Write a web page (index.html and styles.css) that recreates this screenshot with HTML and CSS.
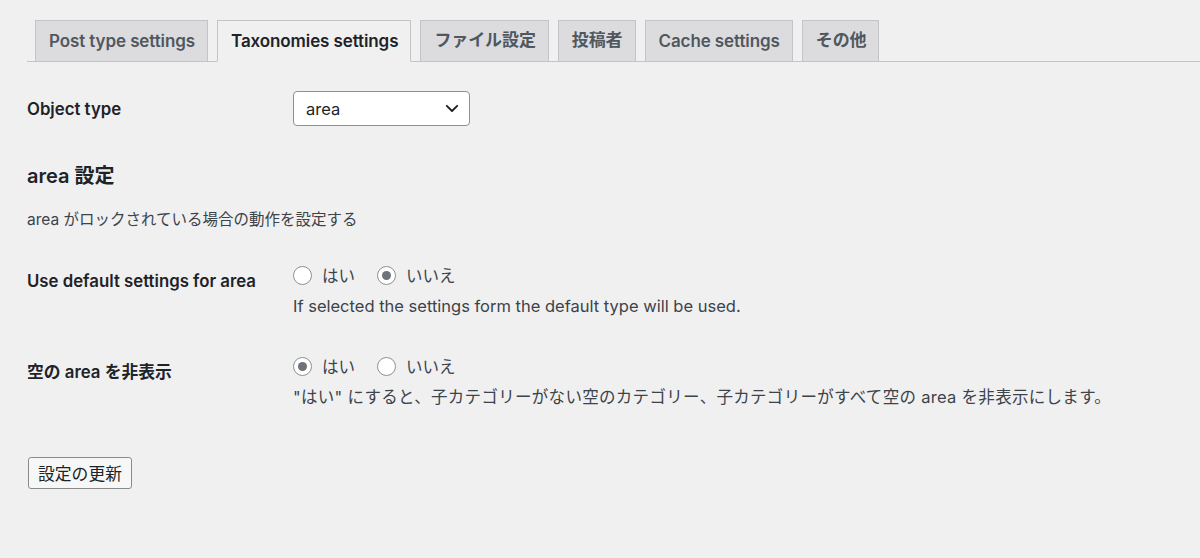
FILE: index.html
```html
<!DOCTYPE html>
<html lang="ja">
<head>
<meta charset="utf-8">
<title>Settings</title>
<link rel="stylesheet" href="styles.css">
</head>
<body>
<div class="wrap">
  <nav class="tabs">
    <a class="tab">Post type settings</a>
    <a class="tab active">Taxonomies settings</a>
    <a class="tab ja">ファイル設定</a>
    <a class="tab ja">投稿者</a>
    <a class="tab">Cache settings</a>
    <a class="tab ja">その他</a>
  </nav>

  <div class="row row-object">
    <div class="label">Object type</div>
    <div class="field">
      <div class="select">
        <span>area</span>
        <svg class="chev" width="14" height="9" viewBox="0 0 14 9"><path d="M1.8 1.8 L7 7 L12.2 1.8" fill="none" stroke="#1d2327" stroke-width="1.9" stroke-linecap="round" stroke-linejoin="round"/></svg>
      </div>
    </div>
  </div>

  <h2 class="heading">area 設定</h2>
  <p class="intro">area がロックされている場合の動作を設定する</p>

  <div class="row row-opt">
    <div class="label">Use default settings for area</div>
    <div class="field">
      <div class="radios">
        <label class="radio"><span class="dot"></span>はい</label>
        <label class="radio"><span class="dot on"></span>いいえ</label>
      </div>
      <p class="desc">If selected the settings form the default type will be used.</p>
    </div>
  </div>

  <div class="row row-opt second">
    <div class="label">空の area を非表示</div>
    <div class="field">
      <div class="radios">
        <label class="radio"><span class="dot on"></span>はい</label>
        <label class="radio"><span class="dot"></span>いいえ</label>
      </div>
      <p class="desc wide">"はい" にすると、子カテゴリーがない空のカテゴリー、子カテゴリーがすべて空の area を非表示にします。</p>
    </div>
  </div>

  <button class="submit">設定の更新</button>
</div>
</body>
</html>
```

FILE: styles.css
```css
html, body {
  margin: 0;
  padding: 0;
  background: #f0f0f1;
}
body {
  font-family: "Inter", "Noto Sans CJK JP", sans-serif;
  color: #1d2327;
  font-size: 16.5px;
}
.wrap {
  padding: 20px 0 0 27px;
}
.tabs {
  display: flex;
  border-bottom: 1px solid #c3c4c7;
  height: 41px;
  align-items: flex-end;
}
.tab {
  box-sizing: border-box;
  height: 42px;
  margin-bottom: -1px;
  margin-left: 9px;
  padding: 0 12px 0 13px;
  display: flex;
  align-items: center;
  background: #dcdcde;
  border: 1px solid #c3c4c7;
  color: #50575e;
  font-weight: 600;
  font-size: 17px;
  line-height: 24px;
  letter-spacing: -0.1px;
}
.tab.ja {
  font-family: "Noto Sans CJK JP", sans-serif;
  padding-bottom: 4px;
}
.tab:first-child { margin-left: 8px; }
.tab.active {
  background: #f0f0f1;
  border-bottom-color: #f0f0f1;
  color: #1d2327;
}
.row {
  display: flex;
}
.label {
  width: 266px;
  flex: none;
  font-weight: 600;
  font-size: 16.8px;
}
.row-object {
  margin-top: 29px;
  align-items: center;
}
.select {
  box-sizing: border-box;
  width: 177px;
  height: 35px;
  border: 1px solid #8c8f94;
  border-radius: 4px;
  background: #fff;
  display: flex;
  align-items: center;
  justify-content: space-between;
  padding: 0 10px 0 12px;
  font-size: 16.5px;
}
.heading {
  margin: 36px 0 0;
  font-size: 20px;
  font-weight: 600;
  line-height: 28px;
}
.intro {
  margin: 19px 0 0;
  font-size: 15.5px;
  line-height: 22px;
  color: #3c434a;
}
.row-opt {
  margin-top: 33px;
}
.row-opt.second {
  margin-top: 37px;
}
.row-opt .label {
  padding-top: 5px;
  line-height: 24px;
}
.radios {
  display: flex;
  gap: 22px;
  height: 22px;
  align-items: center;
}
.radio {
  display: flex;
  align-items: center;
  gap: 10px;
  font-size: 16.5px;
  color: #3c434a;
}
.dot {
  box-sizing: border-box;
  width: 19px;
  height: 19px;
  border: 1px solid #8c8f94;
  border-radius: 50%;
  background: #fff;
  position: relative;
}
.dot.on::after {
  content: "";
  position: absolute;
  left: 4px;
  top: 4px;
  width: 9px;
  height: 9px;
  border-radius: 50%;
  background: #6d7378;
}
.desc {
  margin: 8px 0 0;
  font-size: 16.5px;
  line-height: 24px;
  color: #3c434a;
}
.desc.wide {
  letter-spacing: 0.3px;
}
.submit {
  display: block;
  margin-top: 48px;
  box-sizing: border-box;
  width: 104px;
  height: 32px;
  padding: 0;
  font-family: "Noto Sans CJK JP", sans-serif;
  font-size: 16.8px;
  line-height: 30px;
  color: #1d2327;
  background: #f6f7f7;
  border: 1px solid #8a8a8a;
  border-radius: 3px;
  margin-left: 1px;
}
```
